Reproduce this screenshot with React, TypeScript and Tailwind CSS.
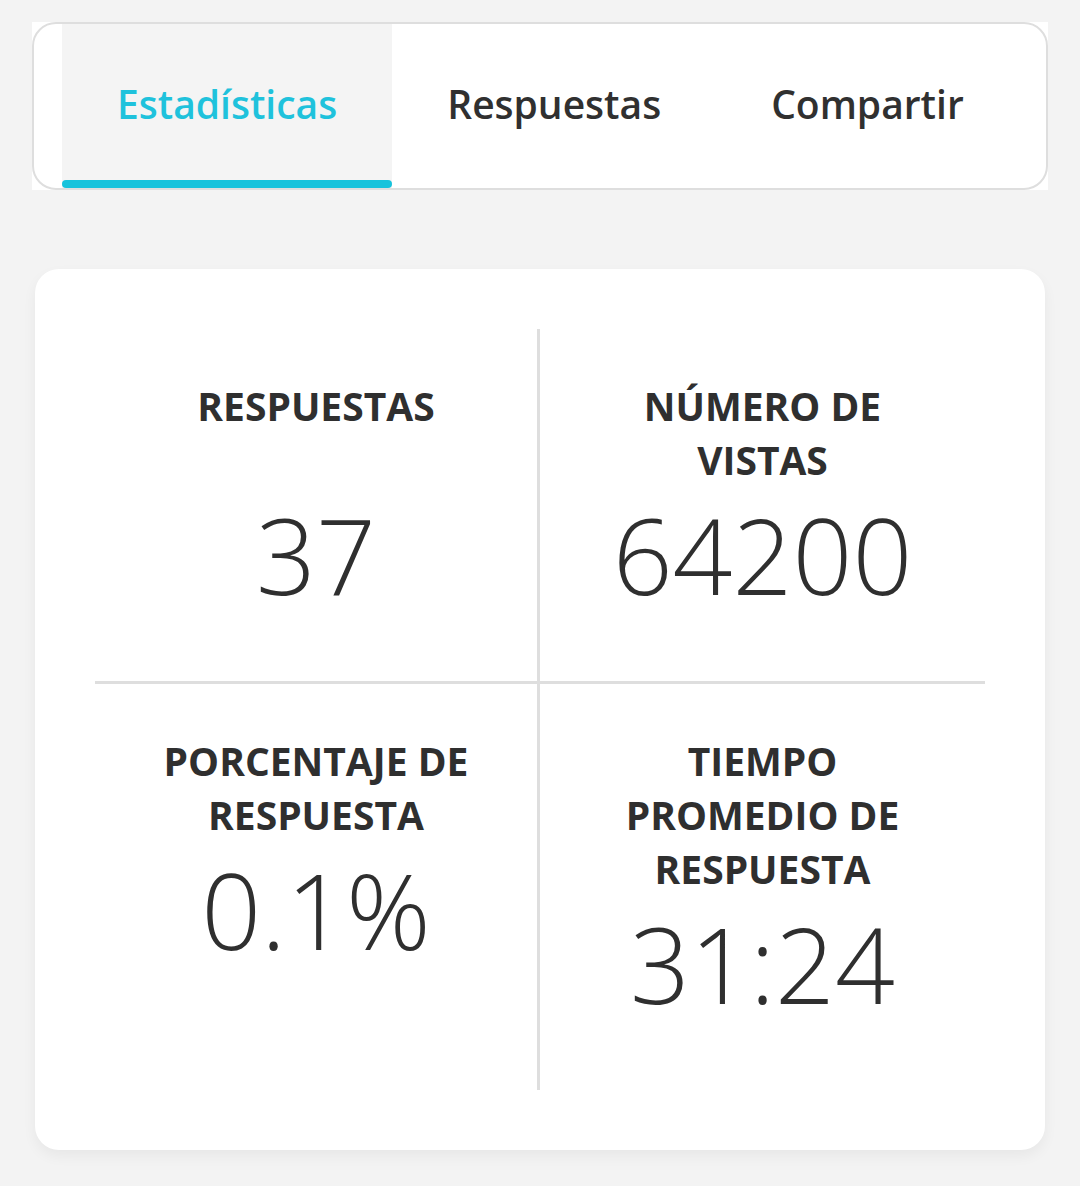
import React from "react";

const tabs = ["Estadísticas", "Respuestas", "Compartir"];

const stats = [
  { label: "RESPUESTAS", value: "37", cls: "border-r-[3px] border-b-[3px]" },
  { label: "NÚMERO DE VISTAS", value: "64200", cls: "border-b-[3px]" },
  { label: "PORCENTAJE DE RESPUESTA", value: "0.1%", cls: "border-r-[3px]" },
  { label: "TIEMPO PROMEDIO DE RESPUESTA", value: "31:24", cls: "" },
];

export default function App() {
  return (
    <div className="min-h-screen bg-[#f3f3f3] pt-[22px] px-[32px] pb-[38px] text-[#2f2f2f]" style={{ fontFamily: "'Open Sans', 'Noto Sans', sans-serif" }}>
      {/* Tab bar */}
      <div className="bg-white">
        <div className="h-[168px] rounded-[24px] border-2 border-[#dedede] flex pl-[28px] overflow-hidden">
          {tabs.map((t, i) => (
            <div
              key={t}
              className={`relative h-full px-[55px] flex items-center justify-center text-[39px] font-semibold ${i === 0 ? "bg-[#f4f4f4] text-[#1fc2dc]" : "text-[#303030]"}`}
            >
              <span className="-mt-[4px]">{t}</span>
              {i === 0 && <div className="absolute left-0 right-0 bottom-0 h-[8px] rounded-full bg-[#17c3dc]" />}
            </div>
          ))}
        </div>
      </div>

      {/* Stats card */}
      <div className="mt-[79px] mx-[3px] bg-white rounded-[24px] p-[60px] shadow-[0_6px_14px_rgba(0,0,0,0.05)]">
        <div className="grid grid-cols-2">
          {stats.map((s) => (
            <div key={s.label} className={`border-[#dedede] flex flex-col items-center text-center pt-[50px] pb-[58px] px-[20px] ${s.cls}`}>
              <div className="min-h-[108px] text-[39px] leading-[54px] font-bold max-w-[316px]">{s.label}</div>
              <div className="text-[105px] leading-[136px] font-light">{s.value}</div>
            </div>
          ))}
        </div>
      </div>
    </div>
  );
}
